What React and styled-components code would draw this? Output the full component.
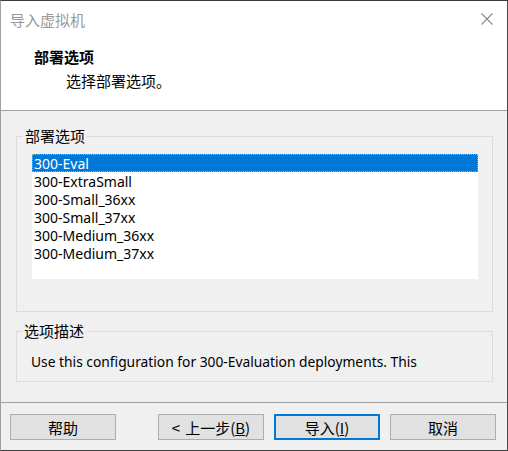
import styled, { createGlobalStyle } from "styled-components";

const GlobalStyle = createGlobalStyle`
  *, *::before, *::after {
    box-sizing: border-box;
  }
  body {
    margin: 0;
    background: #f0f0f0;
    font-family: "Noto Sans", "Noto Sans CJK SC", sans-serif;
  }
`;

const cjk = `"Noto Sans CJK SC", "Noto Sans", sans-serif`;

const Window = styled.div`
  width: 508px;
  height: 451px;
  display: flex;
  flex-direction: column;
  background: #f0f0f0;
  border: 1px solid #3c3c3c;
  border-left-color: #a0a0a0;
  border-right-color: #4a4a4a;
  overflow: hidden;
`;

const Header = styled.div`
  height: 110px;
  flex: none;
  background: #fff;
  border-bottom: 1px solid #a0a0a0;
`;

const TitleBar = styled.div`
  height: 36px;
  display: flex;
  align-items: center;
  justify-content: space-between;
  padding: 0 14px 0 9px;
`;

const Title = styled.div`
  font-family: ${cjk};
  font-size: 15px;
  color: #999;
`;

const CloseIcon = () => (
  <svg width="12" height="12" viewBox="0 0 12 12">
    <path d="M0.5 0.5 L11.5 11.5 M11.5 0.5 L0.5 11.5" stroke="#8a8a8a" strokeWidth="1.1" fill="none" />
  </svg>
);

const Heading = styled.div`
  margin-top: 10px;
  padding-left: ${(p) => p.indent}px;
  font-family: ${cjk};
  font-size: 15px;
  line-height: 20px;
  font-weight: ${(p) => (p.bold ? 700 : 400)};
  color: #000;
  & + & {
    margin-top: 4px;
  }
`;

const Body = styled.div`
  flex: 1;
  padding: 16px 14px 0 15px;
`;

const Group = styled.fieldset`
  margin: 0 0 ${(p) => p.gap || 0}px;
  border: 1px solid #dcdcdc;
  padding: ${(p) => p.pad};
  min-width: 0;
`;

const Legend = styled.legend`
  margin-left: -9px;
  padding: 0 2px;
  font-family: ${cjk};
  font-size: 15px;
  line-height: 18px;
  color: #000;
`;

const ListBox = styled.div`
  height: 125px;
  background: #fff;
`;

const Item = styled.div`
  height: 18px;
  line-height: 19px;
  padding-left: 2px;
  font-size: 14px;
  color: ${(p) => (p.selected ? "#fff" : "#000")};
  background: ${(p) => (p.selected ? "#0078d7" : "transparent")};
  outline: ${(p) => (p.selected ? "1px dotted #f39a2a" : "none")};
  outline-offset: -1px;
  white-space: nowrap;
`;

const Description = styled.div`
  font-size: 13.8px;
  line-height: 18px;
  color: #000;
  white-space: nowrap;
`;

const Footer = styled.div`
  height: 48px;
  flex: none;
  border-top: 1px solid #a0a0a0;
  display: flex;
  align-items: flex-start;
  gap: 10px;
  padding: 11px 9px 0 9px;
`;

const Button = styled.button`
  width: 106px;
  height: 26px;
  margin-right: ${(p) => (p.spaced ? "32px" : "0")};
  padding: 0;
  background: #e1e1e1;
  border: ${(p) => (p.primary ? "2px solid #0078d7" : "1px solid #adadad")};
  font-family: ${cjk};
  font-size: 15px;
  color: #000;
  display: flex;
  align-items: center;
  justify-content: center;
  white-space: pre;
`;

const Gap = styled.span`
  display: inline-block;
  width: 5px;
`;

const options = [
  "300-Eval",
  "300-ExtraSmall",
  "300-Small_36xx",
  "300-Small_37xx",
  "300-Medium_36xx",
  "300-Medium_37xx",
];

export default function App() {
  return (
    <Window>
      <GlobalStyle />
      <Header>
        <TitleBar>
          <Title>导入虚拟机</Title>
          <CloseIcon />
        </TitleBar>
        <Heading bold indent={33}>部署选项</Heading>
        <Heading indent={65}>选择部署选项。</Heading>
      </Header>
      <Body>
        <Group pad="9px 14px 32px 15px" gap={10}>
          <Legend>部署选项</Legend>
          <ListBox>
            {options.map((o, i) => (
              <Item key={o} selected={i === 0}>
                {o}
              </Item>
            ))}
          </ListBox>
        </Group>
        <Group pad="13px 14px 10px 14px">
          <Legend>选项描述</Legend>
          <Description>
            Use this configuration for 300-Evaluation deployments. This
          </Description>
        </Group>
      </Body>
      <Footer>
        <Button spaced>帮助</Button>
        <Button>
          {"<"}
          <Gap />
          {"上一步("}
          <u>B</u>)
        </Button>
        <Button primary>
          导入(<u>I</u>)
        </Button>
        <Button>取消</Button>
      </Footer>
    </Window>
  );
}
